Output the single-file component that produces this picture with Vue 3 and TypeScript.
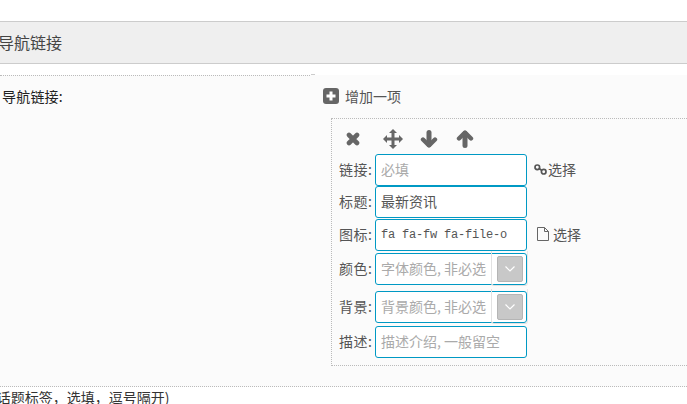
<script setup lang="ts">
interface Field {
    label: string;
    value?: string;
    placeholder?: string;
    mono?: boolean;
    picker?: boolean;
    action?: 'link' | 'file';
    gap: number;
}

const fields: Field[] = [
    { label: '链接:', placeholder: '必填', action: 'link', gap: 0 },
    { label: '标题:', value: '最新资讯', gap: 0 },
    { label: '图标:', value: 'fa fa-fw fa-file-o', mono: true, action: 'file', gap: 1 },
    { label: '颜色:', placeholder: '字体颜色, 非必选', picker: true, gap: 2 },
    { label: '背景:', placeholder: '背景颜色, 非必选', picker: true, gap: 6 },
    { label: '描述:', placeholder: '描述介绍, 一般留空', gap: 3 },
];
</script>

<template>
    <div class="page">
        <h2 class="section-title">导航链接</h2>

        <div class="form-row">
            <div class="form-label">导航链接:</div>
            <div class="form-control">
                <div class="add-item">
                    <svg class="add-icon" width="16" height="16" viewBox="0 0 16 16">
                        <rect width="16" height="16" rx="3" fill="#666" />
                        <path d="M8 3.500v9M3.500 8h9" stroke="#fff" stroke-width="3" />
                    </svg>
                    <span>增加一项</span>
                </div>

                <div class="item-box">
                    <div class="tools">
                        <svg class="tool-x" width="14" height="14" viewBox="0 0 14 14">
                            <path d="M3 3l8 8M11 3l-8 8" stroke="#666" stroke-width="4.600" stroke-linecap="round" />
                        </svg>
                        <svg class="tool-move" width="20" height="20" viewBox="0 0 20 20">
                            <path d="M10 0l4 4h-2.500v4.500H16V6l4 4-4 4v-2.500h-4.500V16H14l-4 4-4-4h2.500v-4.500H4V14l-4-4 4-4v2.500h4.500V4H6z" fill="#666" />
                        </svg>
                        <svg class="tool-down" width="18" height="18" viewBox="0 0 18 18">
                            <path d="M9 2.500v12" stroke="#666" stroke-width="5" stroke-linecap="round" />
                            <path d="M3 9.500l6 6 6-6" fill="none" stroke="#666" stroke-width="4.400" stroke-linecap="round" stroke-linejoin="round" />
                        </svg>
                        <svg class="tool-up" width="18" height="18" viewBox="0 0 18 18">
                            <path d="M9 15.500v-12" stroke="#666" stroke-width="5" stroke-linecap="round" />
                            <path d="M3 8.500l6-6 6 6" fill="none" stroke="#666" stroke-width="4.400" stroke-linecap="round" stroke-linejoin="round" />
                        </svg>
                    </div>

                    <div
                        v-for="field in fields"
                        :key="field.label"
                        class="field"
                        :style="{ marginTop: field.gap + 'px' }"
                    >
                        <label class="field-label">{{ field.label }}</label>
                        <div class="input-wrap">
                            <input
                                class="field-input"
                                :class="{ mono: field.mono }"
                                type="text"
                                :value="field.value"
                                :placeholder="field.placeholder"
                            />
                            <div v-if="field.picker" class="picker">
                                <span class="picker-btn">
                                    <svg width="12" height="8" viewBox="0 0 12 8">
                                        <path d="M1.500 1.500L6 6l4.500-4.500" fill="none" stroke="#fff" stroke-width="1.200" />
                                    </svg>
                                </span>
                            </div>
                        </div>
                        <a v-if="field.action === 'link'" class="pick-link pick-chain">
                            <svg width="13" height="11" viewBox="0 0 13 11">
                                <circle cx="3.300" cy="3.300" r="2.300" fill="none" stroke="#555" stroke-width="1.700" />
                                <circle cx="9.700" cy="7.700" r="2.300" fill="none" stroke="#555" stroke-width="1.700" />
                                <path d="M5 4.500l3 2" stroke="#555" stroke-width="1.700" />
                            </svg>
                            选择
                        </a>
                        <a v-else-if="field.action === 'file'" class="pick-link pick-file">
                            <svg width="12" height="14" viewBox="0 0 12 14">
                                <path d="M.5.500h7l4 4v9H.5zM7.500.500v4h4" fill="none" stroke="#666" />
                            </svg>
                            选择
                        </a>
                    </div>
                </div>
            </div>
        </div>

        <p class="hint">(话题标签，选填，逗号隔开)</p>
    </div>
</template>

<style scoped>
.page {
    position: relative;
    width: 687px;
    height: 404px;
    overflow: hidden;
    padding-top: 21px;
    box-sizing: border-box;
    background: #fff;
    font-family: "Noto Sans CJK SC", "Noto Sans", sans-serif;
    font-size: 14px;
    color: #555;
}
.section-title {
    margin: 0;
    height: 41px;
    text-indent: -2px;
    border-top: 1px solid #ccc;
    border-bottom: 1px solid #ccc;
    background: #efefef;
    font-size: 16px;
    font-weight: 400;
    line-height: 41px;
    color: #444;
}
.form-row {
    position: relative;
    display: grid;
    grid-template-columns: 313px 1fr;
    margin-top: 11px;
    height: 311px;
    background: #fbfbfb;
    border-bottom: 1px dotted #bbb;
}
.form-row::before {
    content: "";
    position: absolute;
    left: 311px;
    top: -1px;
    width: 4px;
    height: 1px;
    background: #ccc;
}
.form-label {
    margin-right: 3px;
    border-top: 1px dotted #bbb;
    padding: 10px 0 0 2px;
    line-height: 20px;
    letter-spacing: 0.2px;
    color: #222;
}
.add-item {
    display: flex;
    align-items: center;
    gap: 6px;
    height: 20px;
    margin: 11px 0 0 10px;
    line-height: 20px;
}
.item-box {
    margin: 12px -20px 0 18px;
    height: 248px;
    box-sizing: border-box;
    border: 1px dotted #bbb;
    padding-left: 7px;
}
.tools {
    display: flex;
    align-items: center;
    height: 35px;
    padding: 4px 0 0 7px;
    box-sizing: border-box;
}
.tool-move {
    margin-left: 23px;
}
.tool-down {
    margin-left: 17px;
}
.tool-up {
    margin-left: 18px;
}
.field {
    display: flex;
    align-items: center;
    height: 32px;
}
.field-label {
    width: 36px;
    flex: none;
    padding-bottom: 2px;
    line-height: 20px;
    letter-spacing: 0.5px;
    white-space: nowrap;
}
.input-wrap {
    position: relative;
    width: 152px;
    height: 32px;
    flex: none;
}
.field-input {
    display: block;
    width: 100%;
    height: 100%;
    box-sizing: border-box;
    padding: 0 5px 2px;
    border: 1px solid #0099c4;
    border-radius: 3px;
    outline: none;
    background: #fff;
    font-family: inherit;
    font-size: 14px;
    color: #555;
}
.field-input::placeholder {
    color: #aaa;
    opacity: 1;
}
.field-input.mono {
    padding-bottom: 0;
    font-family: "Liberation Mono", monospace;
    font-size: 12px;
    letter-spacing: -0.2px;
}
.picker {
    position: absolute;
    right: -1px;
    top: -2px;
    bottom: -1px;
    width: 37px;
    display: flex;
    justify-content: center;
    padding-top: 5px;
    box-sizing: border-box;
    border: 1px solid #e2e2e2;
    border-top: 0;
    border-right-color: #e8e8e8;
    border-radius: 0 0 3px 3px;
}
.picker-btn {
    display: flex;
    align-items: center;
    justify-content: center;
    width: 26px;
    height: 26px;
    box-sizing: border-box;
    border: 1px solid #b5b5b5;
    border-radius: 2px;
    background: #c8c8c8;
}
.pick-link {
    display: flex;
    align-items: center;
    padding-bottom: 2px;
    color: #555;
    white-space: nowrap;
}
.pick-chain {
    margin-left: 7px;
}
.pick-chain svg {
    margin-right: 1px;
}
.pick-file {
    margin-left: 10px;
}
.pick-file svg {
    margin-right: 4px;
}
.hint {
    margin: 0 0 0 -8px;
    line-height: 20px;
    white-space: nowrap;
    color: #333;
}
</style>
